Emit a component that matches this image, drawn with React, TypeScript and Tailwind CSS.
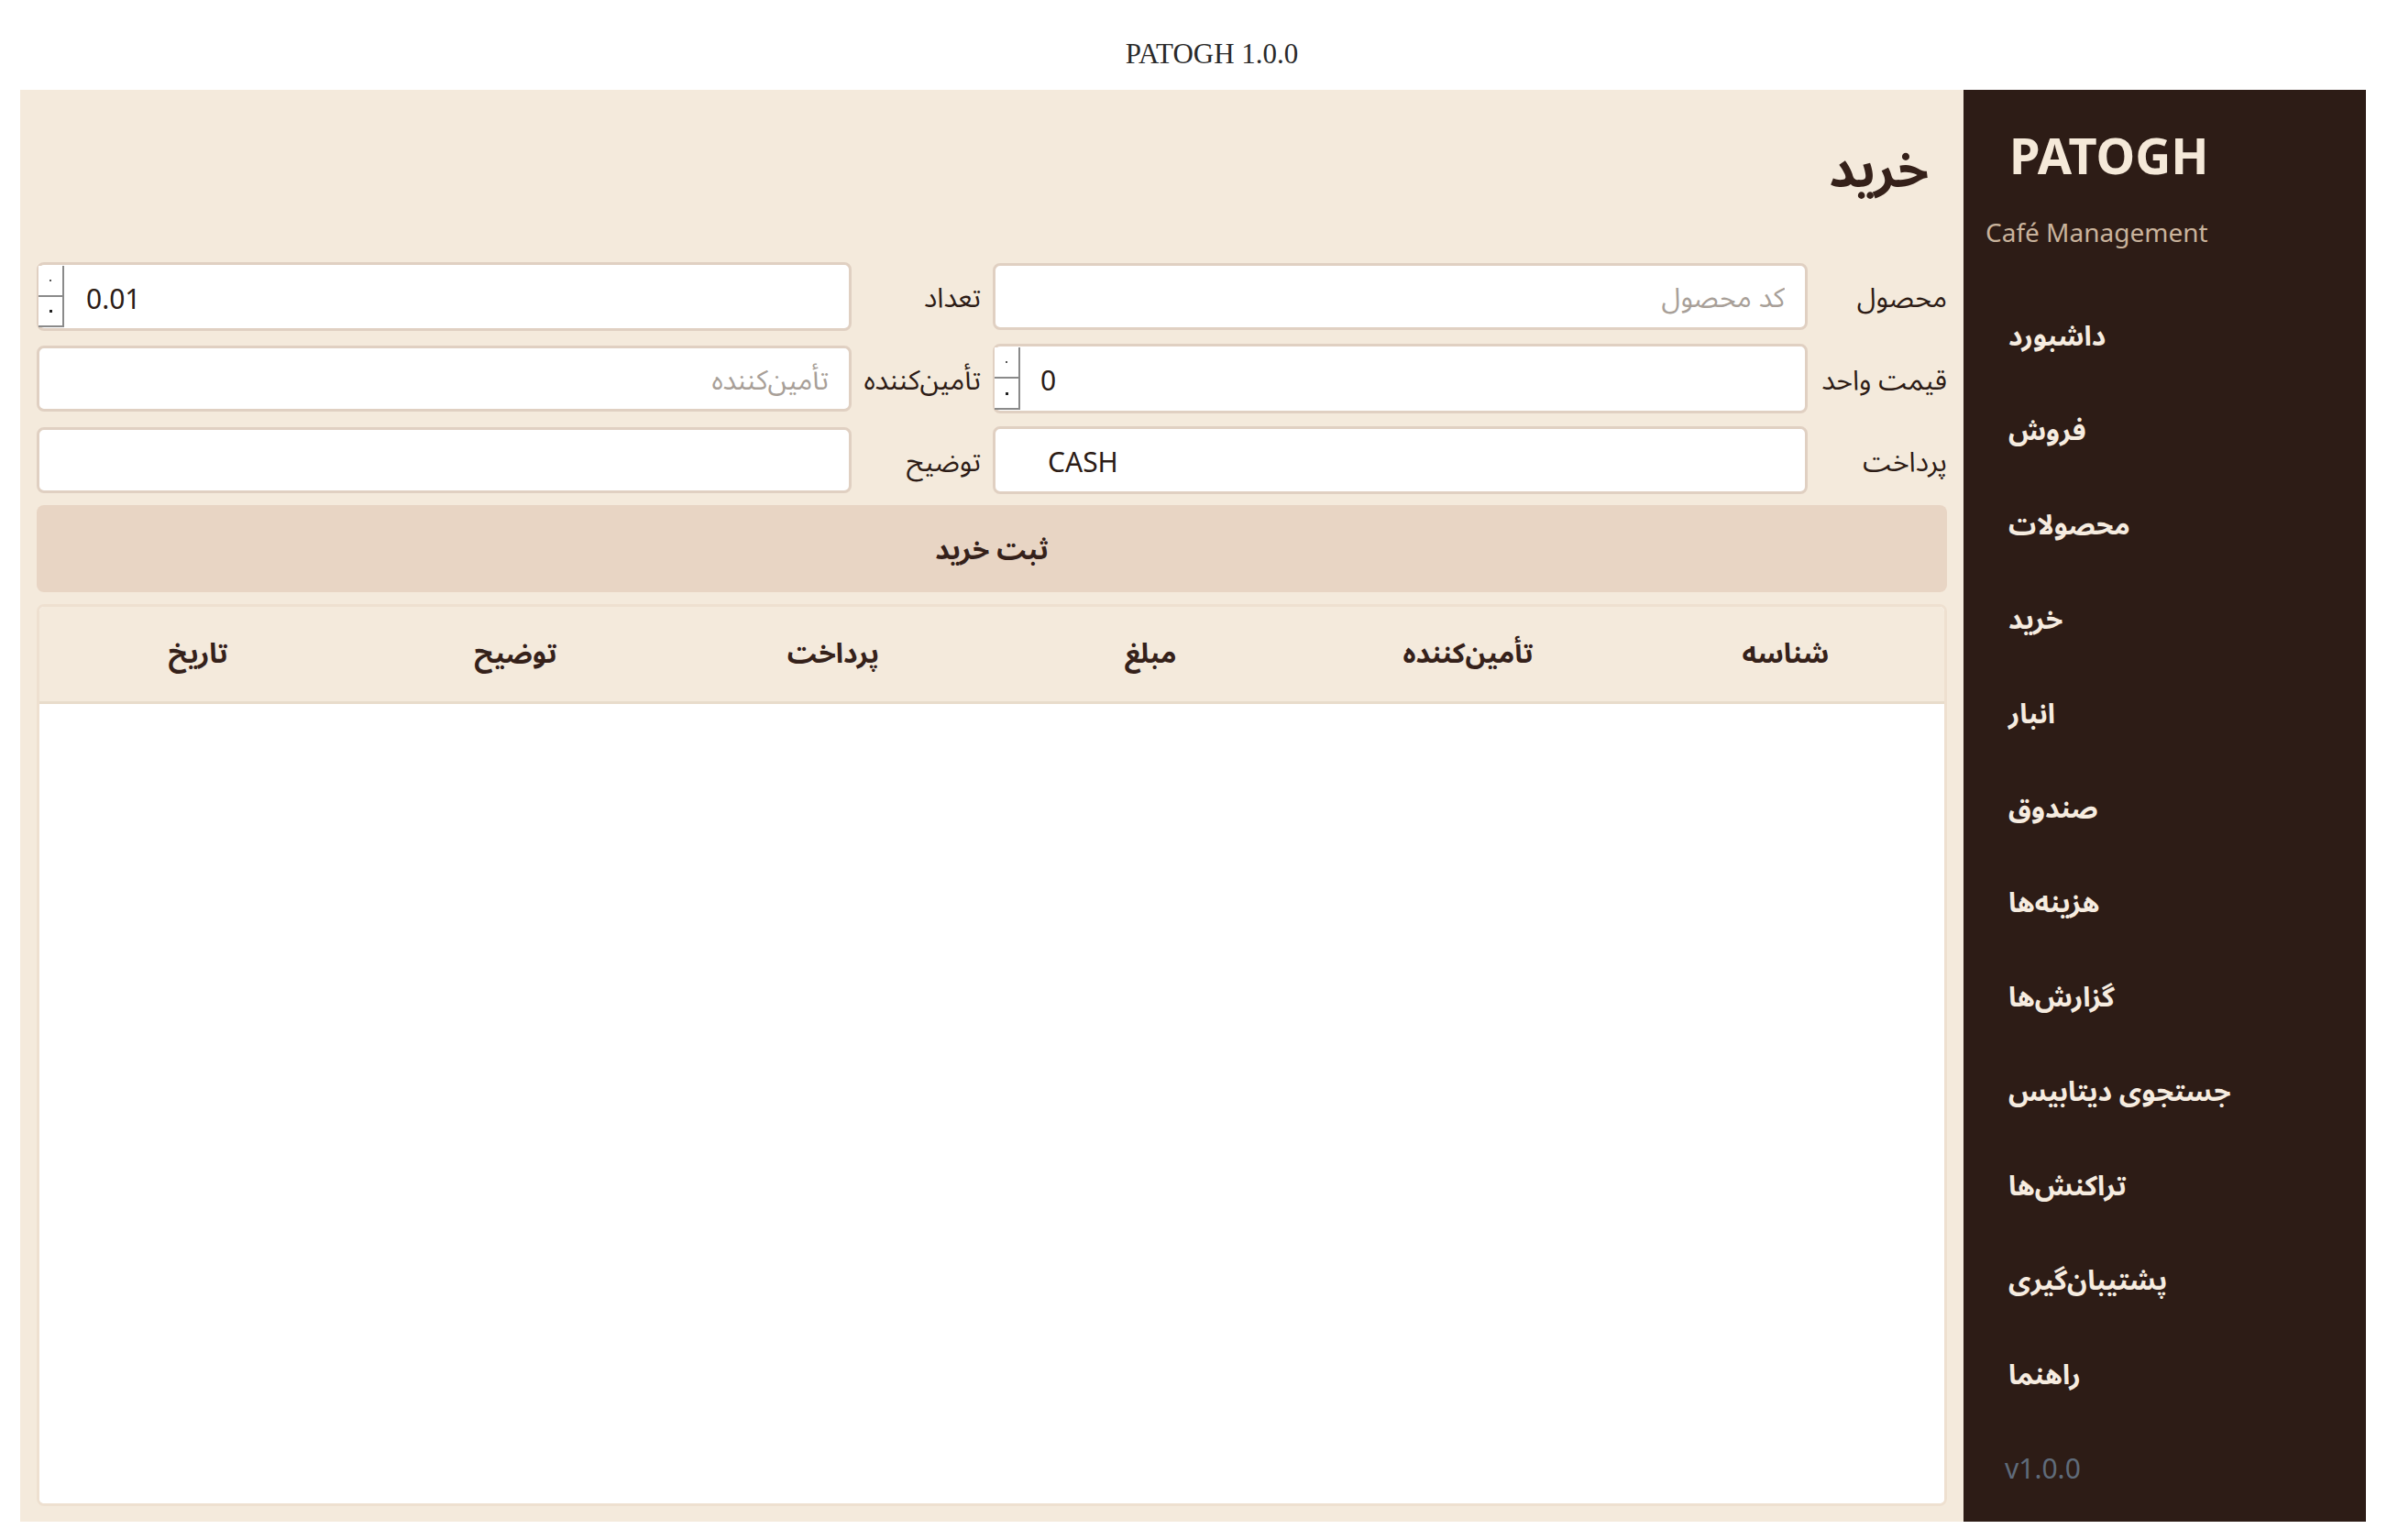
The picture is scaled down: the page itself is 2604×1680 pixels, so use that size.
const font = { fontFamily: '"Noto Sans", "Noto Sans Arabic", "DejaVu Sans", sans-serif' }

const navItems = [
    'داشبورد',
    'فروش',
    'محصولات',
    'خرید',
    'انبار',
    'صندوق',
    'هزینه‌ها',
    'گزارش‌ها',
    'جستجوی دیتابیس',
    'تراکنش‌ها',
    'پشتیبان‌گیری',
    'راهنما',
]

const columns = ['شناسه', 'تأمین‌کننده', 'مبلغ', 'پرداخت', 'توضیح', 'تاریخ']

function Spinner() {
    return (
        <div className="absolute left-[2px] top-[4px] bottom-[4px] flex w-[28px] flex-col">
            <div className="flex flex-1 items-center justify-center border-r-2 border-b-2 border-[#8a8a8a] bg-white">
                <span className="h-[2px] w-[2px] bg-[#555]" />
            </div>
            <div className="flex flex-1 items-center justify-center border-r-2 border-b-2 border-[#8a8a8a] bg-white">
                <span className="h-[3px] w-[3px] bg-[#222]" />
            </div>
        </div>
    )
}

function Field({ value, placeholder, spin, height, pad }: { value?: string; placeholder?: string; spin?: boolean; height: string; pad: string }) {
    return (
        <div className={`relative ${height}`}>
            <input
                readOnly
                dir={value ? 'ltr' : 'rtl'}
                value={value ?? ''}
                placeholder={placeholder}
                style={font}
                className={`h-full w-full rounded-[8px] border-[3px] border-[#e0d0c2] bg-white text-[30px] text-[#2c1c16] outline-none placeholder:text-[#a89f98] ${pad}`}
            />
            {spin && <Spinner />}
        </div>
    )
}

export default function App() {
    return (
        <div className="h-[1680px] w-[2604px] bg-white" style={font}>
            <div className="flex h-[98px] items-center justify-center pt-[20px] pl-[40px] text-[31px] text-[#2a2a2a]" style={{ fontFamily: '"Liberation Serif", serif' }}>
                PATOGH 1.0.0
            </div>
            <div dir="rtl" className="ml-[22px] flex h-[1562px] w-[2559px]">
                {/* sidebar */}
                <aside dir="ltr" className="flex h-full w-[439px] shrink-0 flex-col bg-[#2d1c16] pt-[38px]">
                    <div className="pl-[50px] text-[54px] leading-[66px] font-bold text-[#f5e9d9]">PATOGH</div>
                    <div className="mt-[27px] pl-[24px] text-[28px] leading-[48px] text-[#c9b39c]">Café Management</div>
                    <nav className="mt-[37px] flex flex-col">
                        {navItems.map((item) => (
                            <div key={item} dir="rtl" className="flex h-[103px] items-center justify-end pl-[49px] text-[30px] font-bold text-[#f6ece0]">
                                {item}
                            </div>
                        ))}
                    </nav>
                    <div className="mt-[30px] pl-[45px] text-[30px] leading-[44px] text-[#5f6b7a]">v1.0.0</div>
                </aside>

                {/* main */}
                <main className="flex h-full min-w-0 flex-1 flex-col bg-[#f4eadc] px-[18px] pb-[17px]">
                    <h1 className="mt-[48px] mr-[20px] h-[140px] text-[55px] leading-[74px] font-bold text-[#35211a]">خرید</h1>

                    <div className="grid grid-cols-[139px_889px_minmax(0,1fr)_889px] items-center gap-x-[13px] gap-y-[14px]">
                        <label className="text-[30px] whitespace-nowrap text-[#2d1c16]">محصول</label>
                        <Field placeholder="کد محصول" height="h-[73px]" pad="px-[22px]" />
                        <label className="text-[30px] whitespace-nowrap text-[#2d1c16]">تعداد</label>
                        <Field value="0.01" spin height="h-[75px]" pad="pl-[51px] pt-[3px]" />

                        <label className="text-[30px] whitespace-nowrap text-[#2d1c16]">قیمت واحد</label>
                        <Field value="0" spin height="h-[76px]" pad="pl-[49px] pt-[3px]" />
                        <label className="text-[30px] whitespace-nowrap text-[#2d1c16]">تأمین‌کننده</label>
                        <Field placeholder="تأمین‌کننده" height="h-[72px]" pad="px-[22px]" />

                        <label className="text-[30px] whitespace-nowrap text-[#2d1c16]">پرداخت</label>
                        <Field value="CASH" height="h-[74px]" pad="pl-[57px] pt-[2px]" />
                        <label className="text-[30px] whitespace-nowrap text-[#2d1c16]">توضیح</label>
                        <Field height="h-[72px]" pad="px-[22px]" />
                    </div>

                    <button className="mt-[12px] h-[95px] w-full rounded-[8px] bg-[#e8d5c4] text-[30px] font-bold text-[#35211a]">ثبت خرید</button>

                    <div className="mt-[13px] flex flex-1 flex-col overflow-hidden rounded-[8px] border-[3px] border-[#eee0d0] bg-white">
                        <div className="grid h-[106px] grid-cols-6 items-center border-b-[3px] border-[#e8dccb] bg-[#f4eadc]">
                            {columns.map((col) => (
                                <div key={col} className="pb-[5px] text-center text-[30px] font-bold text-[#35211a]">
                                    {col}
                                </div>
                            ))}
                        </div>
                        <div className="flex-1 bg-white" />
                    </div>
                </main>
            </div>
        </div>
    )
}
